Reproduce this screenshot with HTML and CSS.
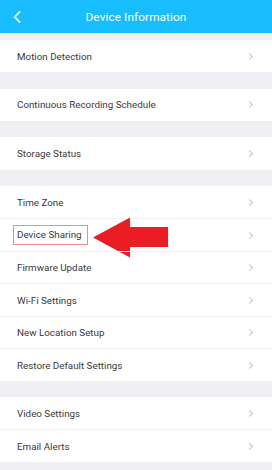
FILE: index.html
```html
<!DOCTYPE html>
<html>
<head>
<meta charset="utf-8">
<link rel="stylesheet" href="styles.css">
</head>
<body>
<div class="screen">
  <header class="topbar">
    <svg class="back" width="8" height="12" viewBox="0 0 8 12"><path d="M6.5 1 L1.8 6 L6.5 11" fill="none" stroke="#fff" stroke-width="1.8" stroke-linecap="square"/></svg>
    <h1 class="title">Device Information</h1>
  </header>
  <div class="gap gap-first"></div>
  <div class="group">
    <div class="row"><span>Motion Detection</span><i class="chev"></i></div>
  </div>
  <div class="gap"></div>
  <div class="group">
    <div class="row"><span>Continuous Recording Schedule</span><i class="chev"></i></div>
  </div>
  <div class="gap"></div>
  <div class="group">
    <div class="row"><span>Storage Status</span><i class="chev"></i></div>
  </div>
  <div class="gap"></div>
  <div class="group">
    <div class="row"><span>Time Zone</span><i class="chev"></i></div>
    <div class="row highlight-row"><span class="boxed">Device Sharing</span><i class="chev"></i>
      <svg class="arrow" width="76" height="41" viewBox="0 0 76 41"><polygon points="0,20.5 37,0.5 37,10 75,10 75,30 37,30 37,40.5" fill="#ec1c24"/></svg>
    </div>
    <div class="row"><span>Firmware Update</span><i class="chev"></i></div>
    <div class="row"><span>Wi-Fi Settings</span><i class="chev"></i></div>
    <div class="row"><span>New Location Setup</span><i class="chev"></i></div>
    <div class="row"><span>Restore Default Settings</span><i class="chev"></i></div>
  </div>
  <div class="gap"></div>
  <div class="group">
    <div class="row"><span>Video Settings</span><i class="chev"></i></div>
    <div class="row"><span>Email Alerts</span><i class="chev"></i></div>
  </div>
  <div class="gap"></div>
</div>
</body>
</html>
```
FILE: styles.css
```css
html, body {
  margin: 0;
  padding: 0;
  background: #efeff4;
}
.screen {
  width: 272px;
  height: 470px;
  overflow: hidden;
  font-family: Roboto, "Noto Sans", sans-serif;
  background: #efeff4;
}
.topbar {
  height: 33px;
  background: #17bdfd;
  display: flex;
  align-items: center;
  justify-content: center;
  position: relative;
}
.back {
  position: absolute;
  left: 13px;
  top: 11px;
}
.title {
  margin: 0;
  color: #fff;
  font-size: 11.8px;
  font-weight: 400;
  letter-spacing: 0.1px;
}
.gap {
  height: 16.5px;
}
.gap-first {
  height: 7px;
}
.group {
  background: #fff;
}
.row {
  height: 32.5px;
  display: flex;
  align-items: center;
  justify-content: space-between;
  padding: 0 18px 0 17px;
  box-sizing: border-box;
  border-top: 1px solid #f1f1f4;
  font-size: 9.8px;
  color: #3a3a3a;
  position: relative;
}
.row:first-child {
  border-top: none;
  height: 32.2px;
}
.chev {
  width: 4px;
  height: 4px;
  border-right: 1px solid #c3c3d6;
  border-top: 1px solid #c3c3d6;
  transform: rotate(45deg);
  margin-right: 2px;
}
.boxed {
  margin-left: -4px;
  padding: 3px 5px 3px 3px;
  border: 1.5px solid #f08a8c;
  line-height: 12px;
}
.arrow {
  position: absolute;
  left: 93px;
  top: -2px;
}
```
